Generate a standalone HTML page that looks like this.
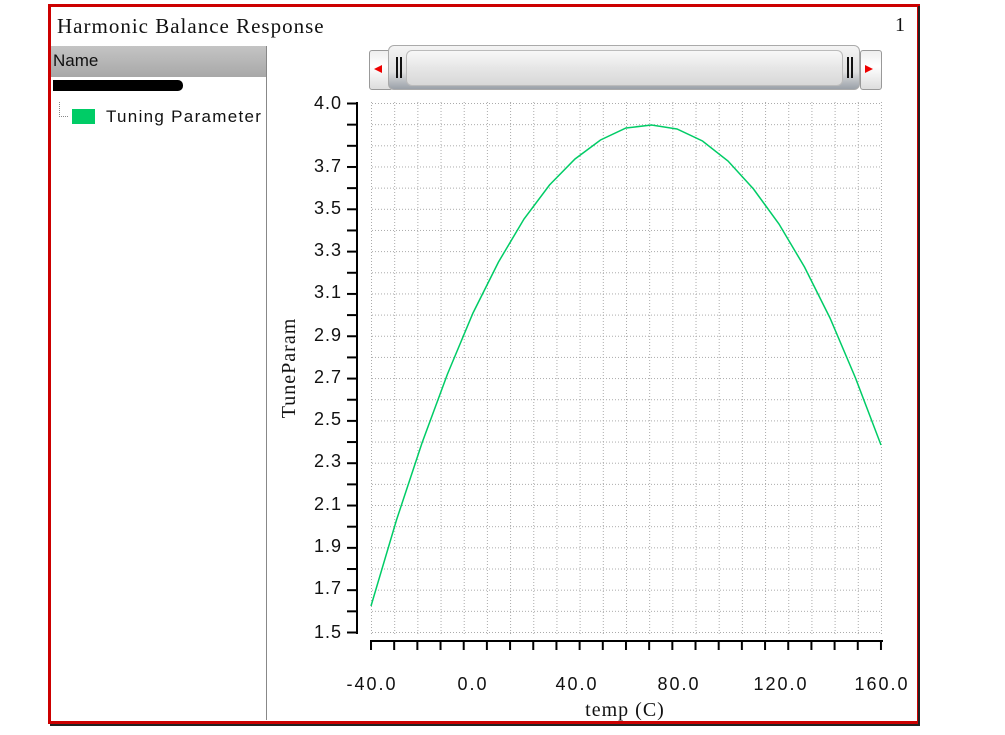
<!DOCTYPE html>
<html><head><meta charset="utf-8"><style>
body{margin:0;width:1005px;height:735px;background:#fff;position:relative;overflow:hidden;font-family:"Liberation Sans",sans-serif}
.abs{position:absolute}
</style></head><body>
<div class="abs" style="left:48px;top:4px;width:866px;height:714px;border:3px solid #cc0000"></div>
<div class="abs" style="left:918px;top:6px;width:2px;height:720px;background:#222"></div>
<div class="abs" style="left:50px;top:724px;width:870px;height:2px;background:#222"></div>
<div class="abs" style="left:57px;top:14px;font-family:'Liberation Serif',serif;font-size:21px;letter-spacing:1px;color:#111">Harmonic Balance Response</div>
<div class="abs" style="left:895px;top:14px;font-family:'Liberation Serif',serif;font-size:20px;color:#111">1</div>
<div class="abs" style="left:51px;top:46px;width:215px;height:31px;background:linear-gradient(#c4c4c4,#a8a8a8);"></div>
<div class="abs" style="left:53px;top:51px;font-size:17px;color:#111">Name</div>
<div class="abs" style="left:266px;top:46px;width:1px;height:674px;background:#888"></div>
<div class="abs" style="left:53px;top:80px;width:130px;height:11px;background:#000;border-radius:0 5px 5px 0"></div>
<div class="abs" style="left:59px;top:102px;width:8px;height:14px;border-left:1px dotted #888;border-bottom:1px dotted #888"></div>
<div class="abs" style="left:72px;top:109px;width:23px;height:15px;background:#00cc66"></div>
<div class="abs" style="left:106px;top:107px;font-size:17px;letter-spacing:1.3px;color:#111">Tuning Parameter</div>
<div class="abs" style="left:369px;top:50px;width:22px;height:38px;background:linear-gradient(#eee,#fff 40%,#ddd);border:1px solid #999;border-radius:3px"></div>
<div class="abs" style="left:860px;top:50px;width:20px;height:38px;background:linear-gradient(#eee,#fff 40%,#ddd);border:1px solid #999;border-radius:3px"></div>
<div class="abs" style="left:374px;top:65px;width:0;height:0;border-right:8px solid #e00;border-top:4px solid transparent;border-bottom:4px solid transparent"></div>
<div class="abs" style="left:865px;top:65px;width:0;height:0;border-left:8px solid #e00;border-top:4px solid transparent;border-bottom:4px solid transparent"></div>
<div class="abs" style="left:388px;top:45px;width:472px;height:45px;background:linear-gradient(#f4f4f4,#e0e0e0 60%,#9aa0a8);border:1px solid #aaa;border-radius:6px;box-sizing:border-box"></div>
<div class="abs" style="left:406px;top:50px;width:437px;height:36px;background:linear-gradient(#f8f8f8,#e6e6e6 50%,#d8d8d8);border:1px solid #bbb;border-radius:6px;box-sizing:border-box"></div>
<div class="abs" style="left:396px;top:57px;width:2px;height:21px;background:#111"></div>
<div class="abs" style="left:400px;top:57px;width:2px;height:21px;background:#111"></div>
<div class="abs" style="left:847px;top:57px;width:2px;height:21px;background:#111"></div>
<div class="abs" style="left:851px;top:57px;width:2px;height:21px;background:#111"></div>
<svg class="abs" style="left:0;top:0" width="1005" height="735">
<defs>
<pattern id="gv" x="371" y="0" width="23.18" height="735" patternUnits="userSpaceOnUse"><line x1="0.5" y1="0" x2="0.5" y2="735" stroke="#aaa" stroke-width="1" stroke-dasharray="1,2"/></pattern>
<pattern id="gh" x="0" y="103" width="1005" height="21.16" patternUnits="userSpaceOnUse"><line x1="0" y1="0.5" x2="1005" y2="0.5" stroke="#aaa" stroke-width="1" stroke-dasharray="1,2"/></pattern>
<pattern id="ty" x="0" y="102.5" width="20" height="21.16" patternUnits="userSpaceOnUse"><rect x="0" y="0" width="20" height="2" fill="#000"/></pattern>
<pattern id="tx" x="370" y="0" width="23.18" height="20" patternUnits="userSpaceOnUse"><rect x="0" y="0" width="2" height="20" fill="#000"/></pattern>
</defs>
<rect x="371" y="100" width="511" height="534" fill="url(#gv)"/>
<rect x="371" y="103" width="511" height="530" fill="url(#gh)"/>
<rect x="356" y="102" width="2" height="532" fill="#000"/>
<rect x="347" y="102" width="9" height="532" fill="url(#ty)"/>
<rect x="370" y="640" width="513" height="2" fill="#000"/>
<rect x="370" y="640" width="513" height="10" fill="url(#tx)"/>
<polyline fill="none" stroke="#00cc66" stroke-width="1.5" points="371,606 396.5,520 422,443 447.5,374 473,313 498.5,262 524,219 549.5,185 575,159 600.5,140 626,128 651.5,125 677,129 702.5,141 728,161 753.5,189 779,224 804.5,267 830,318 855.5,378 881,445"/>
<g font-family="Liberation Sans,sans-serif" font-size="18" letter-spacing="1" fill="#111" text-anchor="end">
<text x="342" y="109">4.0</text><text x="342" y="172">3.7</text><text x="342" y="214">3.5</text><text x="342" y="256">3.3</text><text x="342" y="298">3.1</text><text x="342" y="341">2.9</text><text x="342" y="383">2.7</text><text x="342" y="425">2.5</text><text x="342" y="467">2.3</text><text x="342" y="510">2.1</text><text x="342" y="552">1.9</text><text x="342" y="594">1.7</text><text x="342" y="638">1.5</text>
</g>
<g font-family="Liberation Sans,sans-serif" font-size="18" letter-spacing="2" fill="#111" text-anchor="middle">
<text x="372" y="690">-40.0</text><text x="473" y="690">0.0</text><text x="577" y="690">40.0</text><text x="679" y="690">80.0</text><text x="781" y="690">120.0</text><text x="882" y="690">160.0</text>
</g>
<text x="625" y="716" font-family="Liberation Serif,serif" font-size="20" letter-spacing="1" fill="#111" text-anchor="middle">temp (C)</text>
<text transform="translate(295,368) rotate(-90)" font-family="Liberation Serif,serif" font-size="20" letter-spacing="1" fill="#111" text-anchor="middle">TuneParam</text>
</svg>
</body></html>
